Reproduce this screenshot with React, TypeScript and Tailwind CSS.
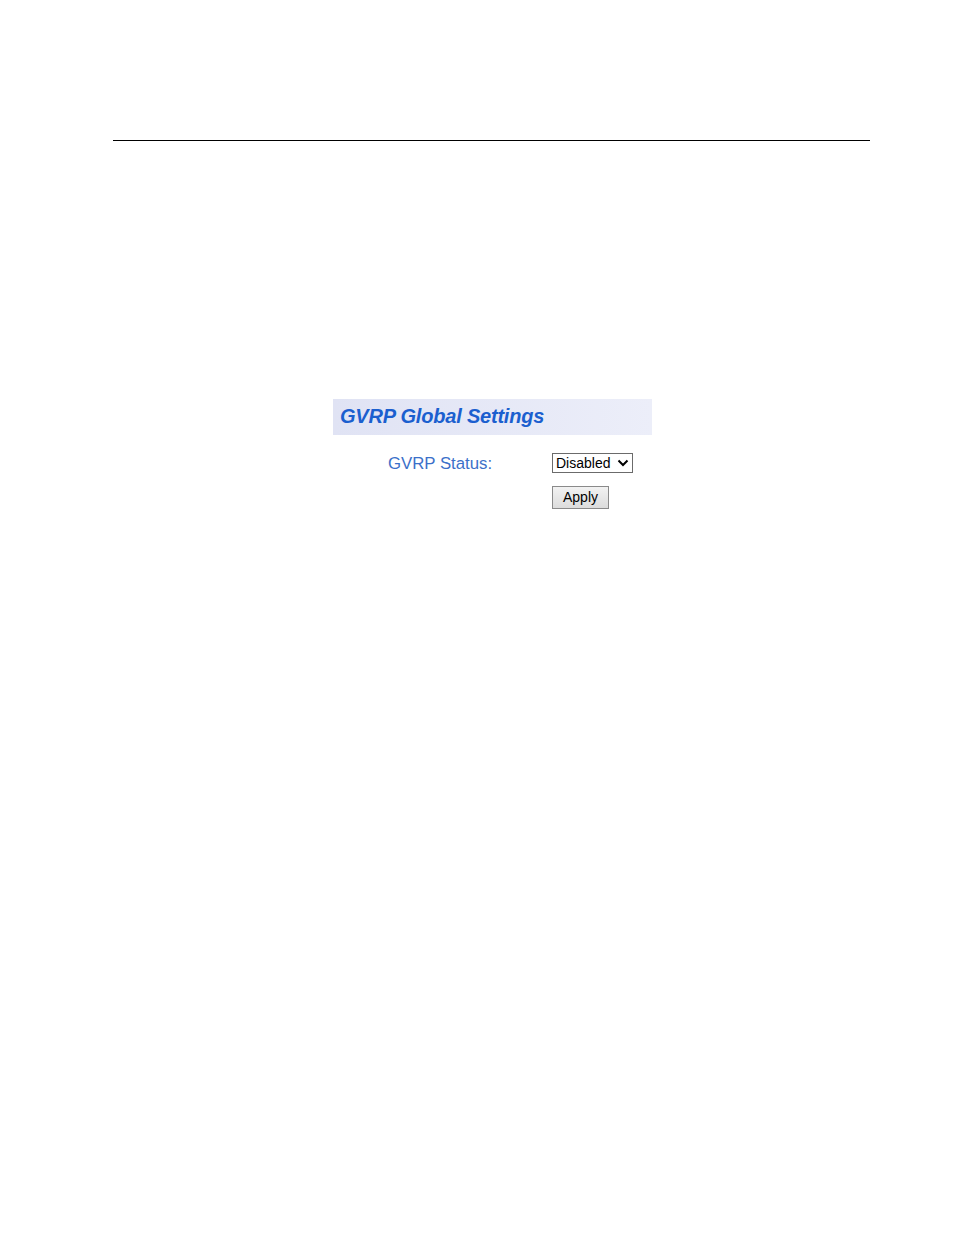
export default function App() {
  return (
    <div className="w-[954px] h-[1235px] bg-white font-['Liberation_Sans',Arial,sans-serif]">
      {/* page rule */}
      <div className="pt-[140px] pl-[113px]">
        <div className="w-[757px] h-px bg-black" />
      </div>

      {/* GVRP panel */}
      <div className="ml-[333px] mt-[258px] w-[319px]">
        <div className="h-[36px] flex items-center pl-[7px] pb-[2px] bg-gradient-to-r from-[#e0e3f4] to-[#eceef9]">
          <h2 className="text-[20px] font-bold italic text-[#1b5fcf] tracking-[-0.2px]">GVRP Global Settings</h2>
        </div>
        <div className="flex items-center mt-[18px] h-[20px]">
          <span className="ml-[55px] w-[164px] text-[16.8px] text-[#3b70c9] pt-[1px]">GVRP Status:</span>
          <div className="w-[81px] h-[20px] border border-[#6b6b6b] bg-white flex items-center justify-between pl-[3px] pr-[3px]">
            <span className="text-[14px] text-black leading-none">Disabled</span>
            <svg width="12" height="8" viewBox="0 0 12 8">
              <path d="M1.5 1.5 L6 6 L10.5 1.5" fill="none" stroke="#000" strokeWidth="2" />
            </svg>
          </div>
        </div>
        <div className="mt-[12px] ml-[219px]">
          <button className="w-[57px] h-[23px] border border-[#8a8a8a] bg-gradient-to-b from-[#f2f2f2] to-[#dcdcdc] text-[14px] text-black leading-none">
            Apply
          </button>
        </div>
      </div>
    </div>
  );
}
